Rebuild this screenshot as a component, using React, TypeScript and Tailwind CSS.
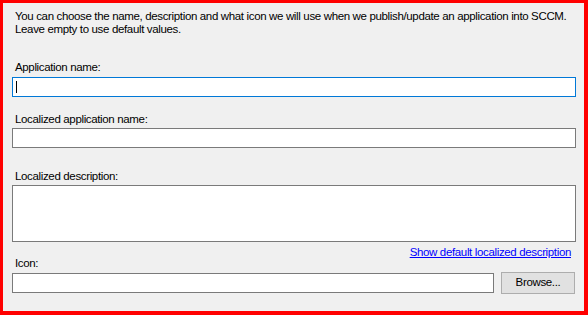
import { useState } from 'react';

const FONT = { fontFamily: '"Liberation Sans", Arial, sans-serif' };

export default function App() {
  const [appName, setAppName] = useState('');
  const [locName, setLocName] = useState('');
  const [locDesc, setLocDesc] = useState('');
  const [icon, setIcon] = useState('');

  return (
    <div
      className="w-[588px] h-[315px] bg-[#f0f0f0] border-[#ff0000] border-t-[3px] border-l-[3px] border-r-[4px] border-b-[4px] text-[11.5px] tracking-[-0.35px] leading-[13px] text-black overflow-hidden"
      style={FONT}
    >
      <div className="pl-[9px] pr-[8px] pt-[7px]">
        {/* Intro */}
        <p className="pl-[3px] whitespace-nowrap">
          You can choose the name, description and what icon we will use when we publish/update an application into SCCM.
          <br />
          Leave empty to use default values.
        </p>

        {/* Application name */}
        <label className="block pl-[3px] mt-[25px]">Application name:</label>
        <div className="relative mt-[3px]">
          <input
            value={appName}
            onChange={(e) => setAppName(e.target.value)}
            className="block w-full h-[20px] bg-white border border-[#0078d7] outline-none px-[3px] text-[12px]"
          />
          {appName === '' && (
            <span className="absolute left-[4px] top-[4px] w-px h-[12px] bg-black" />
          )}
        </div>

        {/* Localized application name */}
        <label className="block pl-[3px] mt-[16px]">Localized application name:</label>
        <input
          value={locName}
          onChange={(e) => setLocName(e.target.value)}
          className="block w-full h-[20px] mt-[2px] bg-white border border-[#7a7a7a] outline-none px-[3px] text-[12px]"
        />

        {/* Localized description */}
        <label className="block pl-[3px] mt-[22px]">Localized description:</label>
        <textarea
          value={locDesc}
          onChange={(e) => setLocDesc(e.target.value)}
          className="block w-full h-[57px] mt-[2px] bg-white border border-[#7a7a7a] outline-none px-[3px] text-[12px] resize-none"
        />

        {/* Link + Icon label */}
        <div className="flex justify-between items-start mt-[4px] h-[24px]">
          <label className="pl-[3px] pt-[11px]">Icon:</label>
          <a href="#" className="text-[#0000ff] underline mr-[5px]">
            Show default localized description
          </a>
        </div>

        {/* Icon picker */}
        <div className="flex items-center gap-[7px] mt-[2px] pr-[1px]">
          <input
            value={icon}
            onChange={(e) => setIcon(e.target.value)}
            className="block flex-1 h-[20px] bg-white border border-[#7a7a7a] outline-none px-[3px] text-[12px]"
          />
          <button className="w-[74px] h-[22px] bg-[#e1e1e1] border border-[#adadad] leading-none">
            Browse...
          </button>
        </div>
      </div>
    </div>
  );
}
